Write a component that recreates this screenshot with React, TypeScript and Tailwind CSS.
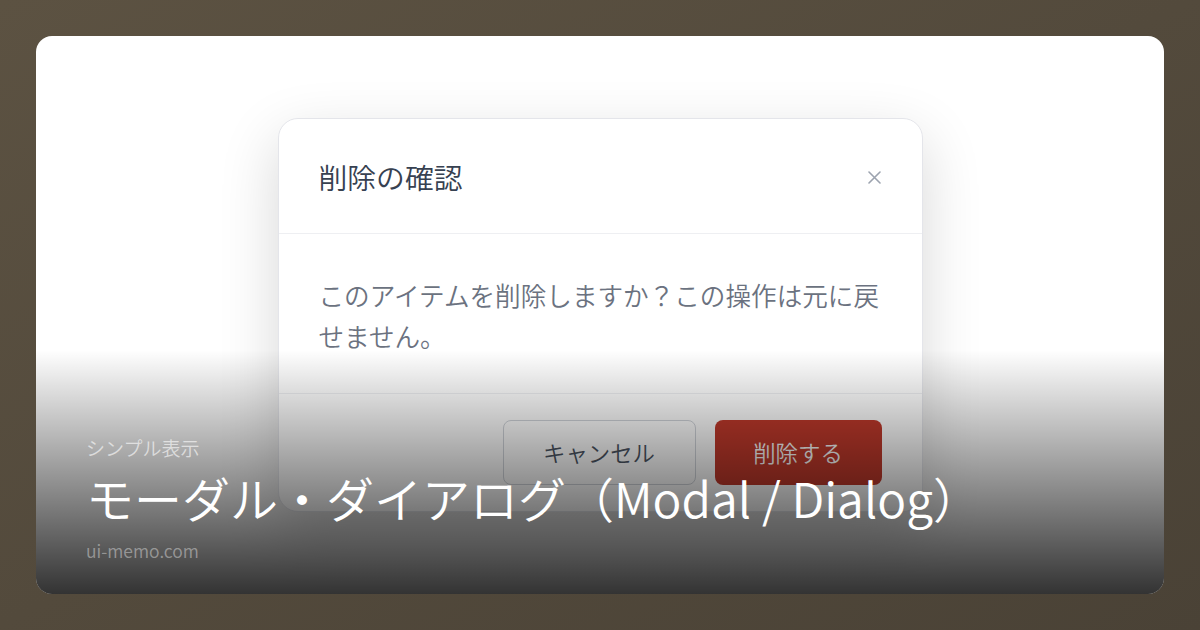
import React from "react";

export default function App() {
  return (
    <div className="w-[1200px] h-[630px] p-[36px] bg-linear-to-br from-[#5c5242] to-[#4a4236] font-['Noto_Sans_CJK_JP','Noto_Sans',sans-serif] font-[350]">
      <div className="relative w-full h-full overflow-hidden rounded-[16px] bg-white flex justify-center pt-[82px]">
        {/* confirmation dialog */}
        <div className="w-[645px] h-fit rounded-[20px] border border-[#e4e5ea] bg-white shadow-[0_20px_60px_rgba(0,0,0,0.16)]">
          <div className="flex items-center justify-between px-10 pt-[37px] pb-[35px] border-b border-[#eeeff2]">
            <h2 className="text-[28.8px] leading-[42px] text-[#374151]">削除の確認</h2>
            <svg width="13" height="13" viewBox="0 0 13 13" className="mr-[1px]">
              <path d="M1 1L12 12M12 1L1 12" stroke="#9ca3af" strokeWidth="1.6" strokeLinecap="round" />
            </svg>
          </div>
          <div className="px-10 pt-[40px] pb-[37px] border-b border-[#eeeff2]">
            <p className="text-[25.6px] leading-[41px] text-[#6b7280]">
              このアイテムを削除しますか？この操作は元に戻せません。
            </p>
          </div>
          <div className="flex justify-end gap-[19px] px-10 pt-[26px] pb-[26px]">
            <button className="w-[193px] h-[65px] rounded-[8px] border border-[#d1d5db] bg-white text-[22.4px] text-[#4b5563]">
              キャンセル
            </button>
            <button className="w-[167px] h-[65px] rounded-[8px] bg-[#c0392b] text-[22.4px] text-white">
              削除する
            </button>
          </div>
        </div>

        {/* caption overlay */}
        <div className="absolute inset-x-0 bottom-0 h-[244px] bg-linear-to-b from-transparent to-black/80 flex flex-col justify-end px-[50px] pb-[31px]">
          <div className="text-[19px] leading-[24px] text-white/60">シンプル表示</div>
          <div className="mt-[6px] text-[48px] leading-[62px] text-white">モーダル・ダイアログ（Modal / Dialog）</div>
          <div className="mt-[11px] text-[17.5px] leading-[24px] text-white/40">ui-memo.com</div>
        </div>
      </div>
    </div>
  );
}
